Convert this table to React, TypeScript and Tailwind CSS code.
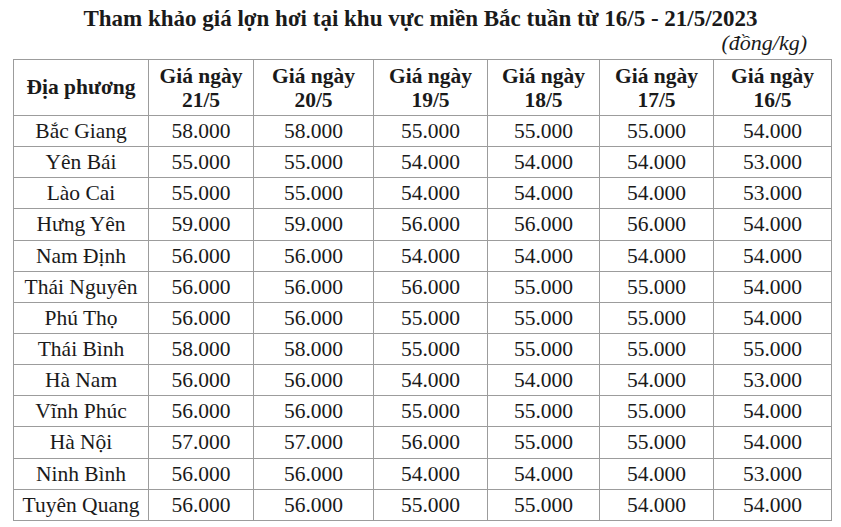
const days = ['21/5', '20/5', '19/5', '18/5', '17/5', '16/5'];

const rows: [string, string[]][] = [
  ['Bắc Giang', ['58.000', '58.000', '55.000', '55.000', '55.000', '54.000']],
  ['Yên Bái', ['55.000', '55.000', '54.000', '54.000', '54.000', '53.000']],
  ['Lào Cai', ['55.000', '55.000', '54.000', '54.000', '54.000', '53.000']],
  ['Hưng Yên', ['59.000', '59.000', '56.000', '56.000', '56.000', '54.000']],
  ['Nam Định', ['56.000', '56.000', '54.000', '54.000', '54.000', '54.000']],
  ['Thái Nguyên', ['56.000', '56.000', '56.000', '55.000', '55.000', '54.000']],
  ['Phú Thọ', ['56.000', '56.000', '55.000', '55.000', '55.000', '54.000']],
  ['Thái Bình', ['58.000', '58.000', '55.000', '55.000', '55.000', '55.000']],
  ['Hà Nam', ['56.000', '56.000', '54.000', '54.000', '54.000', '53.000']],
  ['Vĩnh Phúc', ['56.000', '56.000', '55.000', '55.000', '55.000', '54.000']],
  ['Hà Nội', ['57.000', '57.000', '56.000', '55.000', '55.000', '54.000']],
  ['Ninh Bình', ['56.000', '56.000', '54.000', '54.000', '54.000', '53.000']],
  ['Tuyên Quang', ['56.000', '56.000', '55.000', '55.000', '54.000', '54.000']],
];

export default function App() {
  return (
    <div
      className="w-[841px] h-[527px] bg-white text-[#1a1a1a] overflow-hidden"
      style={{ fontFamily: '"Liberation Serif", "Times New Roman", serif' }}
    >
      <h1 className="pt-[6px] text-center text-[23px] leading-[26px] font-bold">
        Tham khảo giá lợn hơi tại khu vực miền Bắc tuần từ 16/5 - 21/5/2023
      </h1>
      <div className="text-right pr-[34px] text-[22px] leading-[22px] italic">(đồng/kg)</div>

      {/* grid lines come from the gray background showing through 1px gaps */}
      <div className="ml-[13px] mt-[5px] w-[819px] grid grid-cols-[134px_104px_119px_113px_111px_113px_117px] grid-rows-[55px_repeat(13,30.15px)] gap-px p-px bg-[#9c9c9c]">
        <div className="bg-white flex items-center justify-center text-[21.5px] font-bold">Địa phương</div>
        {days.map(d => (
          <div key={d} className="bg-white flex flex-col items-center justify-center text-[21.5px] leading-[24px] font-bold">
            <span>Giá ngày</span>
            <span>{d}</span>
          </div>
        ))}
        {rows.map(([name, prices]) => (
          <>
            <div key={name} className="bg-white flex items-center justify-center text-[21.5px]">{name}</div>
            {prices.map((p, i) => (
              <div key={name + i} className="bg-white flex items-center justify-center text-[21.5px]">{p}</div>
            ))}
          </>
        ))}
      </div>
    </div>
  );
}
